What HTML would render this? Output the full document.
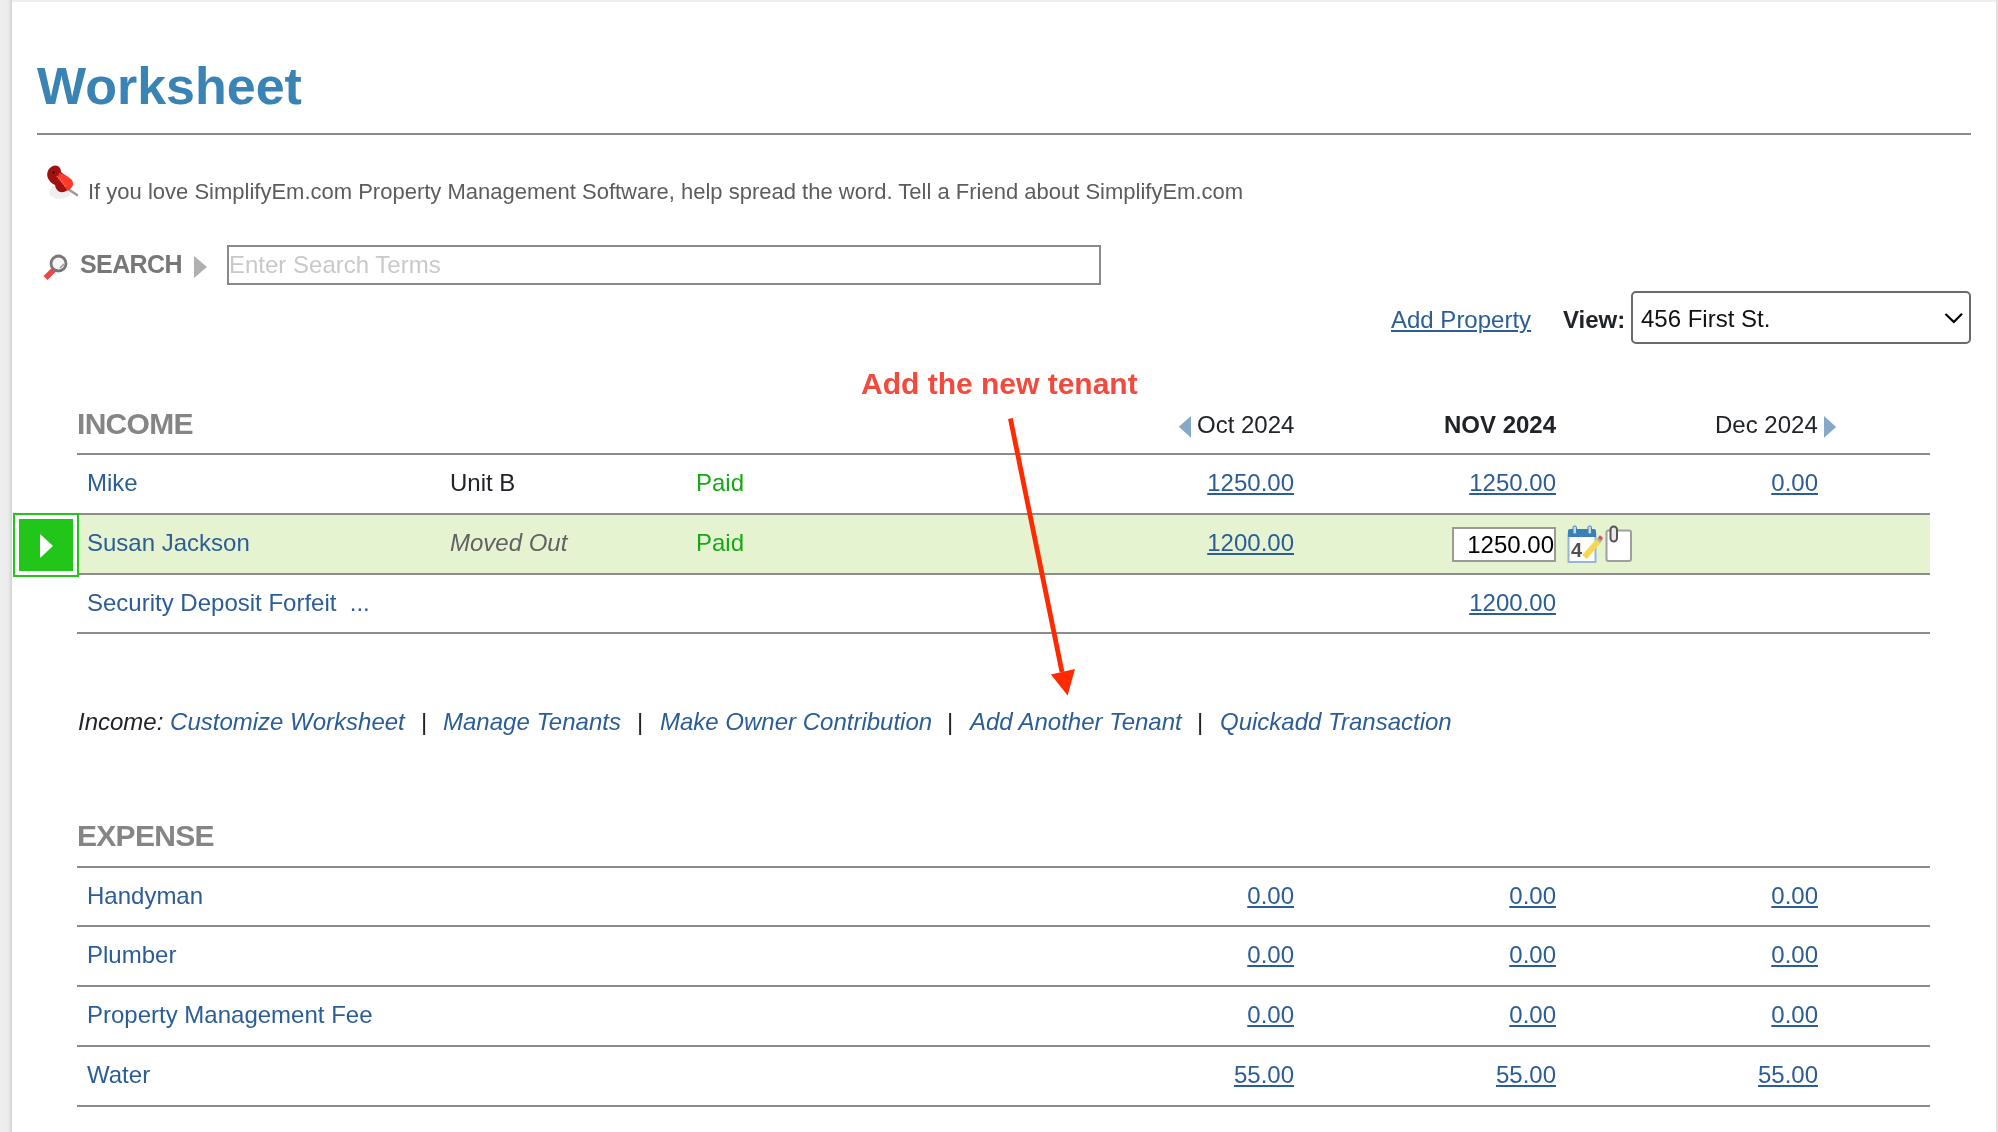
<!DOCTYPE html>
<html><head><meta charset="utf-8">
<style>
html,body{margin:0;padding:0;}
body{width:1998px;height:1132px;position:relative;overflow:hidden;background:#ededed;font-family:"Liberation Sans",sans-serif;}
#panel{position:absolute;left:12px;top:2px;width:1984px;height:1130px;background:#fff;}
.t{position:absolute;white-space:nowrap;line-height:1;}
.r{text-align:right;}
.hl{position:absolute;left:77px;width:1853px;height:2px;background:#8c8c8c;}
.lnk{color:#2b5d97;}
.u{text-decoration:underline;text-decoration-thickness:2px;text-underline-offset:2px;}
.s24{font-size:24px;}
.grn{color:#17a817;}
</style></head><body>
<div id="panel"></div>
<div style="position:absolute;left:0;top:0;width:12px;height:1132px;background:linear-gradient(to right,#eeeeee 0,#ececec 7px,#e6e7e8 9px,#dcdddc 10.5px,#cfd1cf 12px);"></div>
<div style="position:absolute;left:1996px;top:0;width:2px;height:1132px;background:#dfdfdf;"></div>
<div id="wrap" style="position:absolute;left:0;top:0;width:1998px;height:1132px;will-change:transform;">

<!-- Title -->
<div class="t" style="left:37px;top:60px;font-size:52px;font-weight:bold;color:#3a83b5;">Worksheet</div>
<div style="position:absolute;left:37px;top:133px;width:1934px;height:2px;background:#8a8a8a;"></div>

<!-- Tell a friend -->
<div class="t" style="left:88px;top:181px;font-size:22px;color:#5c5c5c;">If you love SimplifyEm.com Property Management Software, help spread the word. Tell a Friend about SimplifyEm.com</div>

<!-- Search -->
<div class="t" style="left:80px;top:252px;font-size:25px;letter-spacing:-0.6px;font-weight:bold;color:#777;">SEARCH</div>
<div style="position:absolute;left:227px;top:245px;width:870px;height:36px;border:2px solid #8a8a8a;"></div>
<div class="t" style="left:229px;top:253px;font-size:24px;color:#c9c9c9;">Enter Search Terms</div>

<!-- Add property / view -->
<div class="t lnk u" style="left:1391px;top:308px;font-size:24px;">Add Property</div>
<div class="t" style="left:1563px;top:308px;font-size:24px;font-weight:bold;color:#202328;">View:</div>
<div style="position:absolute;left:1631px;top:291px;width:336px;height:49px;border:2px solid #6a6a6a;border-radius:5px;"></div>
<div class="t" style="left:1641px;top:307px;font-size:24px;color:#111;">456 First St.</div>

<!-- Annotation -->
<div class="t" style="left:861px;top:369px;font-size:30px;font-weight:bold;color:#f24a3c;">Add the new tenant</div>

<!-- INCOME -->
<div class="t" style="left:77px;top:409px;font-size:30px;letter-spacing:-0.7px;font-weight:bold;color:#858585;">INCOME</div>
<div class="t s24" style="left:1197px;top:413px;color:#202328;">Oct 2024</div>
<div class="t s24" style="left:1444px;top:413px;color:#202328;font-weight:bold;">NOV 2024</div>
<div class="t s24" style="left:1715px;top:413px;color:#202328;">Dec 2024</div>

<div class="hl" style="top:453px;"></div>
<div style="position:absolute;left:77px;top:515px;width:1853px;height:59px;background:#e6f3d1;"></div>
<div class="hl" style="top:513px;"></div>
<div class="hl" style="top:573px;"></div>
<div class="hl" style="top:632px;"></div>

<div class="t s24 lnk" style="left:87px;top:471px;">Mike</div>
<div class="t s24" style="left:450px;top:471px;color:#202328;">Unit B</div>
<div class="t s24 grn" style="left:696px;top:471px;">Paid</div>
<div class="t s24 lnk u r" style="right:704px;top:471px;">1250.00</div>
<div class="t s24 lnk u r" style="right:442px;top:471px;">1250.00</div>
<div class="t s24 lnk u r" style="right:180px;top:471px;">0.00</div>

<div class="t s24 lnk" style="left:87px;top:531px;">Susan Jackson</div>
<div class="t s24" style="left:450px;top:531px;color:#626262;font-style:italic;">Moved Out</div>
<div class="t s24 grn" style="left:696px;top:531px;">Paid</div>
<div class="t s24 lnk u r" style="right:704px;top:531px;">1200.00</div>

<div class="t s24 lnk" style="left:87px;top:591px;">Security Deposit Forfeit &nbsp;...</div>
<div class="t s24 lnk u r" style="right:442px;top:591px;">1200.00</div>

<!-- Income links -->
<div class="t s24" style="left:78px;top:710px;font-style:italic;color:#202328;">Income: <span class="lnk">Customize Worksheet</span></div>
<div class="t s24" style="left:421px;top:710px;color:#202328;">|</div>
<div class="t s24 lnk" style="left:443px;top:710px;font-style:italic;">Manage Tenants</div>
<div class="t s24" style="left:637px;top:710px;color:#202328;">|</div>
<div class="t s24 lnk" style="left:660px;top:710px;font-style:italic;">Make Owner Contribution</div>
<div class="t s24" style="left:947px;top:710px;color:#202328;">|</div>
<div class="t s24 lnk" style="left:970px;top:710px;font-style:italic;">Add Another Tenant</div>
<div class="t s24" style="left:1197px;top:710px;color:#202328;">|</div>
<div class="t s24 lnk" style="left:1220px;top:710px;font-style:italic;">Quickadd Transaction</div>

<!-- EXPENSE -->
<div class="t" style="left:77px;top:821px;font-size:30px;letter-spacing:-0.7px;font-weight:bold;color:#858585;">EXPENSE</div>
<div class="hl" style="top:866px;"></div>
<div class="hl" style="top:925px;"></div>
<div class="hl" style="top:985px;"></div>
<div class="hl" style="top:1045px;"></div>
<div class="hl" style="top:1105px;"></div>

<div class="t s24 lnk" style="left:87px;top:884px;">Handyman</div>
<div class="t s24 lnk u r" style="right:704px;top:884px;">0.00</div>
<div class="t s24 lnk u r" style="right:442px;top:884px;">0.00</div>
<div class="t s24 lnk u r" style="right:180px;top:884px;">0.00</div>

<div class="t s24 lnk" style="left:87px;top:943px;">Plumber</div>
<div class="t s24 lnk u r" style="right:704px;top:943px;">0.00</div>
<div class="t s24 lnk u r" style="right:442px;top:943px;">0.00</div>
<div class="t s24 lnk u r" style="right:180px;top:943px;">0.00</div>

<div class="t s24 lnk" style="left:87px;top:1003px;">Property Management Fee</div>
<div class="t s24 lnk u r" style="right:704px;top:1003px;">0.00</div>
<div class="t s24 lnk u r" style="right:442px;top:1003px;">0.00</div>
<div class="t s24 lnk u r" style="right:180px;top:1003px;">0.00</div>

<div class="t s24 lnk" style="left:87px;top:1063px;">Water</div>
<div class="t s24 lnk u r" style="right:704px;top:1063px;">55.00</div>
<div class="t s24 lnk u r" style="right:442px;top:1063px;">55.00</div>
<div class="t s24 lnk u r" style="right:180px;top:1063px;">55.00</div>


<!-- pushpin -->
<svg style="position:absolute;left:36px;top:160px;" width="50" height="45" viewBox="36 160 50 45">
  <ellipse cx="60" cy="192" rx="11" ry="7" fill="#e2e2e2" opacity="0.55"/>
  <line x1="68" y1="189" x2="77" y2="195" stroke="#9a9a9a" stroke-width="2.6" stroke-linecap="round"/>
  <path d="M49 169 Q53 164 58 166 Q61 168 61 172 L71 180 Q74 185 70 189 L66 191 Q62 193.5 58 191 Q55 188 55 185 Q49 182 47.5 177 Q46.5 172 49 169 Z" fill="#a01212"/>
  <path d="M59 173 Q66 174 72 180 Q75 185 70 189 L67 190 Q63 184 58 178 Z" fill="#ff3a2a"/>
  <path d="M57 176 L66 187" stroke="#ff6a5a" stroke-width="1.6" stroke-dasharray="1.2 1.2"/>
  <circle cx="53.5" cy="172.5" r="0.9" fill="#000"/>
</svg>

<!-- magnifier -->
<svg style="position:absolute;left:40px;top:250px;" width="32" height="34" viewBox="40 250 32 34">
  <line x1="45.5" y1="278" x2="54" y2="269.5" stroke="#f04545" stroke-width="5.5"/>
  <circle cx="58.5" cy="263.5" r="7.5" fill="#f6f6f6" stroke="#777" stroke-width="2.8"/>
  <path d="M60 268 L64 264" stroke="#999" stroke-width="1.5"/>
</svg>
<!-- search triangle -->
<svg style="position:absolute;left:190px;top:252px;" width="22" height="30" viewBox="190 252 22 30">
  <polygon points="194,256 207,267 194,278" fill="#b0b0b0"/>
</svg>

<!-- select chevron -->
<svg style="position:absolute;left:1940px;top:308px;" width="26" height="20" viewBox="1940 308 26 20">
  <polyline points="1945.5,314 1953.8,322 1962,313.8" fill="none" stroke="#000" stroke-width="2.2"/>
</svg>

<!-- month triangles -->
<svg style="position:absolute;left:1175px;top:412px;" width="20" height="30" viewBox="1175 412 20 30">
  <polygon points="1178.8,426.8 1191,416 1191,437.7" fill="#86a9c9"/>
</svg>
<svg style="position:absolute;left:1820px;top:412px;" width="20" height="30" viewBox="1820 412 20 30">
  <polygon points="1824,416 1836.2,426.9 1824,437.7" fill="#86a9c9"/>
</svg>

<!-- annotation arrow -->
<svg style="position:absolute;left:990px;top:405px;" width="100" height="300" viewBox="990 405 100 300">
  <line x1="1010.4" y1="418.6" x2="1062" y2="672" stroke="#ff2a00" stroke-width="4.8"/>
  <polygon points="1050.9,674.4 1075,669.1 1067.6,695.6" fill="#ff2a00"/>
</svg>

<!-- green play box -->
<div style="position:absolute;left:13px;top:513px;width:62px;height:60px;border:2px solid #22c51a;background:#fff;"></div>
<div style="position:absolute;left:19px;top:519px;width:54px;height:52px;background:#22c51a;"></div>
<svg style="position:absolute;left:36px;top:530px;" width="22" height="32" viewBox="36 530 22 32">
  <polygon points="40,534 53,546 40,558" fill="#fff"/>
</svg>

<!-- amount input -->
<div style="position:absolute;left:1452px;top:527px;width:100px;height:31px;border:2px solid #9a9a9a;background:#fff;"></div>
<div class="t s24 r" style="right:444px;top:533px;color:#000;">1250.00</div>

<!-- calendar icon -->
<svg style="position:absolute;left:1562px;top:520px;" width="46" height="48" viewBox="1562 520 46 48">
  <rect x="1568.5" y="534" width="27" height="28" fill="#fff" stroke="#94b6d8" stroke-width="2"/>
  <path d="M1568 537 L1568 531 Q1568 529 1570 529 L1594 529 Q1596 529 1596 531 L1596 537 Z" fill="#3a80b8"/>
  <rect x="1573" y="526" width="3.5" height="8" rx="1.5" fill="#c8d8e8" stroke="#3a80b8" stroke-width="1"/>
  <rect x="1588" y="526" width="3.5" height="8" rx="1.5" fill="#c8d8e8" stroke="#3a80b8" stroke-width="1"/>
  <text x="1571" y="556.5" font-family="Liberation Sans" font-weight="bold" font-size="20" fill="#505050">4</text>
  <line x1="1584.5" y1="557" x2="1598.5" y2="541" stroke="#f6d652" stroke-width="6"/>
  <line x1="1598.3" y1="541.2" x2="1601" y2="538" stroke="#b0b0b0" stroke-width="5"/>
  <line x1="1599.5" y1="539" x2="1601.5" y2="536.5" stroke="#e05050" stroke-width="4"/>
</svg>

<!-- clip icon -->
<svg style="position:absolute;left:1600px;top:520px;" width="38" height="48" viewBox="1600 520 38 48">
  <rect x="1606.5" y="530.5" width="24.5" height="30.5" rx="2" fill="#fff" stroke="#a0a0a0" stroke-width="2"/>
  <rect x="1610.5" y="526.5" width="6.5" height="15" rx="3.2" fill="#e8e8e8" stroke="#555" stroke-width="2"/>
</svg>

</div>
</body></html>
